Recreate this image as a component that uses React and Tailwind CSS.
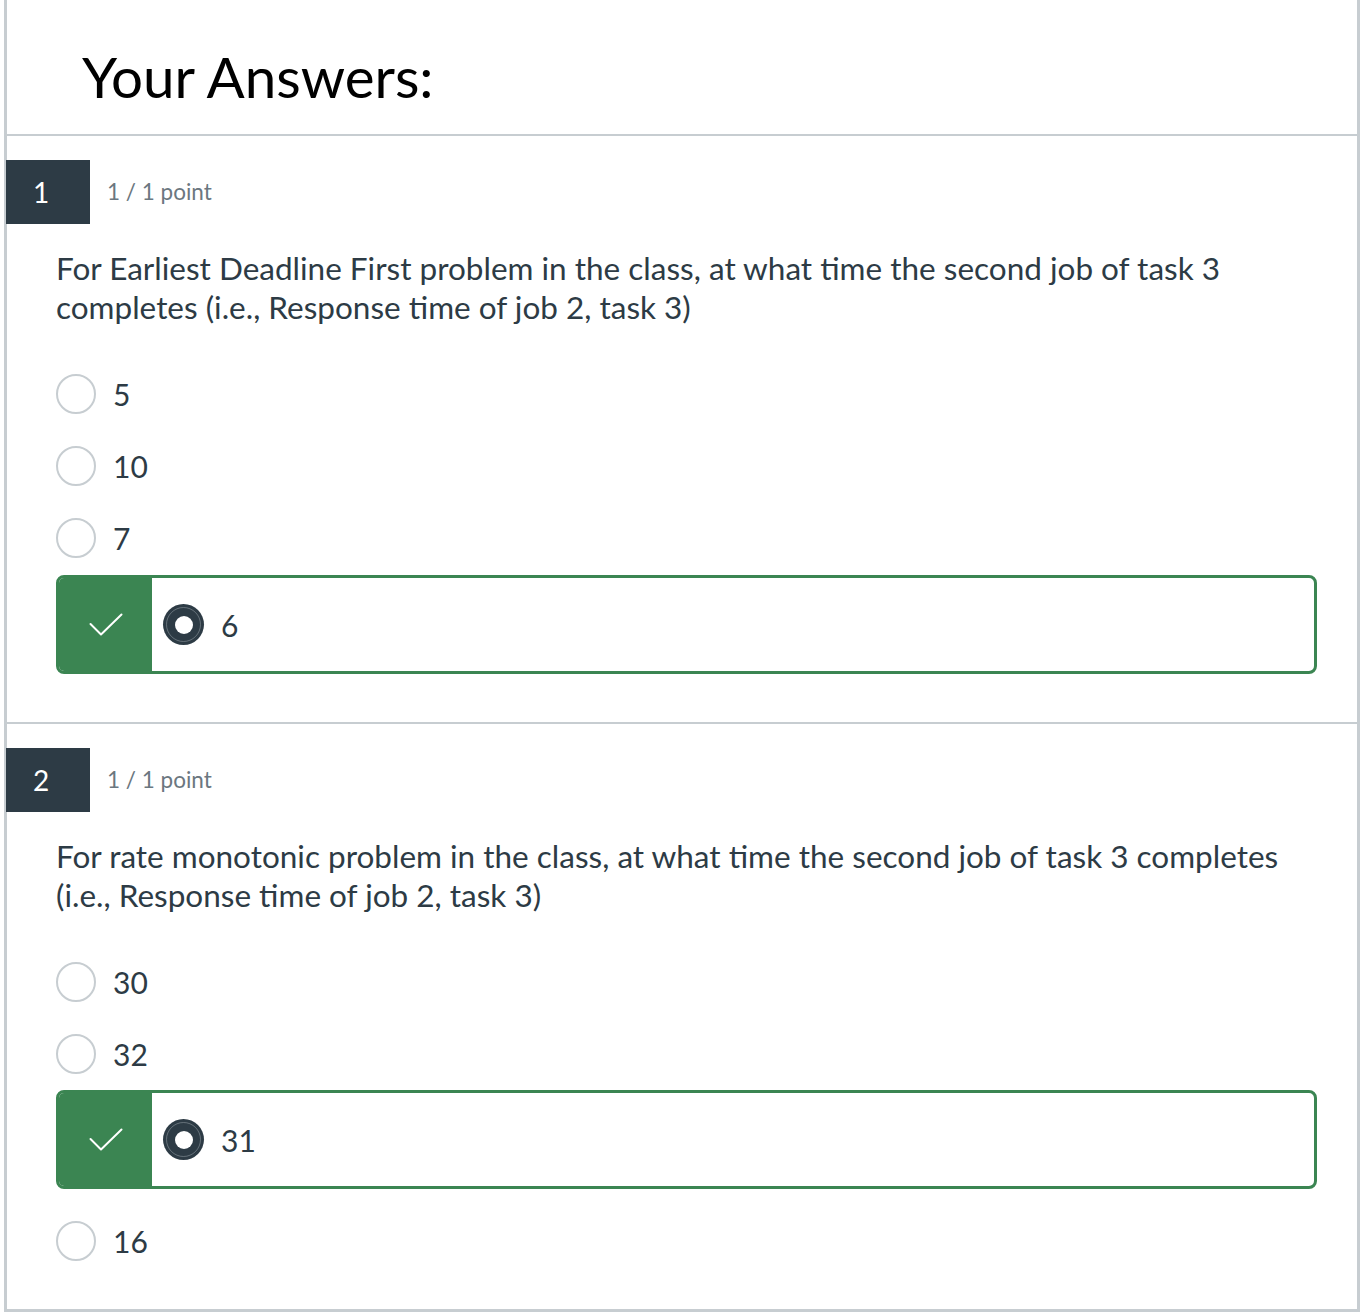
import React from "react";

function Radio() {
  return <div className="w-[40px] h-[40px] rounded-full border-2 border-[#c7cdd1] bg-white shrink-0" />;
}

function Option({ label }) {
  return (
    <div className="h-[72px] flex items-center">
      <Radio />
      <span className="ml-[17px] text-[30px] text-[#2d3b45] leading-none">{label}</span>
    </div>
  );
}

function Correct({ label }) {
  return (
    <div className="h-[99px] border-[3px] border-[#3b8552] rounded-[8px] flex overflow-hidden">
      <div className="w-[93px] bg-[#3b8552] flex items-center justify-center">
        <svg width="34" height="24" viewBox="0 0 34 24" fill="none">
          <polyline points="1.5,11 12,21.5 32.5,1.5" stroke="white" strokeWidth="2" strokeLinecap="round" strokeLinejoin="round" />
        </svg>
      </div>
      <div className="flex items-center pl-[11px]">
        <div className="w-[41px] h-[41px] rounded-full bg-[#2d3b45] flex items-center justify-center relative">
          <div className="absolute inset-[3px] rounded-full border border-[#8a949b] opacity-60" />
          <div className="w-[18px] h-[18px] rounded-full bg-white relative" />
        </div>
        <span className="ml-[17px] text-[30px] text-[#2d3b45] leading-none">{label}</span>
      </div>
    </div>
  );
}

function Header({ n }) {
  return (
    <div className="flex items-center">
      <div className="w-[84px] h-[64px] -ml-[1px] bg-[#2d3b45] text-white text-[28px] flex items-center pl-[27px]">{n}</div>
      <span className="ml-[17px] text-[22.5px] text-[#6b7780]">1 / 1 point</span>
    </div>
  );
}

export default function App() {
  return (
    <div className="bg-white pl-[4px] pr-[2px] w-[1362px]" style={{ fontFamily: "Lato, 'Noto Sans', sans-serif" }}>
      <div className="border-l-[3px] border-r-[3px] border-b-[3px] border-[#c7cdd1]">
        <div className="h-[136px] border-b-2 border-[#c7cdd1] flex items-center pl-[75px] pt-[18px]">
          <h1 className="text-[56.5px] text-black leading-none">Your Answers:</h1>
        </div>

        <div className="pt-[24px] border-b-2 border-[#c7cdd1]">
          <Header n="1" />
          <div className="pl-[49px] pr-[40px] pb-[48px]">
            <p className="mt-[25px] text-[31.5px] leading-[39px] text-[#2d3b45]">
              For Earliest Deadline First problem in the class, at what time the second job of task 3 completes (i.e., Response time of job 2, task 3)
            </p>
            <div className="mt-[31px]">
              <Option label="5" />
              <Option label="10" />
              <Option label="7" />
              <div className="mt-[1px]">
                <Correct label="6" />
              </div>
            </div>
          </div>
        </div>

        <div className="pt-[24px]">
          <Header n="2" />
          <div className="pl-[49px] pr-[40px] pb-[32px]">
            <p className="mt-[25px] text-[31.5px] leading-[39px] text-[#2d3b45]">
              For rate monotonic problem in the class, at what time the second job of task 3 completes (i.e., Response time of job 2, task 3)
            </p>
            <div className="mt-[31px]">
              <Option label="30" />
              <Option label="32" />
              <Correct label="31" />
              <div className="mt-[16px]">
                <Option label="16" />
              </div>
            </div>
          </div>
        </div>
      </div>
    </div>
  );
}
